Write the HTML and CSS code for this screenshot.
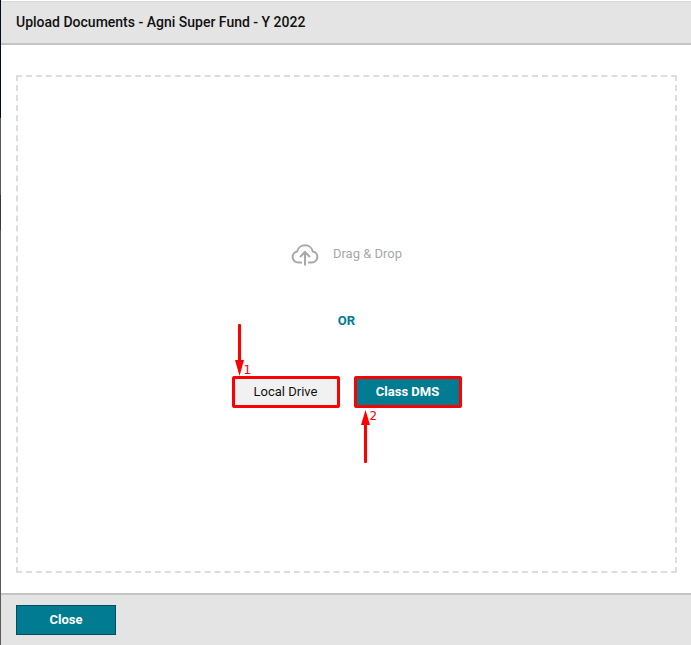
FILE: index.html
```html
<!DOCTYPE html>
<html lang="en">
<head>
<meta charset="utf-8">
<title>Upload Documents</title>
<link rel="stylesheet" href="styles.css">
</head>
<body>
<div class="dialog">
  <header class="dialog-header">
    <h1 class="dialog-title">Upload Documents - Agni Super Fund - Y 2022</h1>
  </header>
  <main class="dialog-body">
    <section class="dropzone">
      <div class="drop-hint">
        <svg class="cloud" width="28" height="24" viewBox="0 0 28 24" fill="none" stroke="currentColor" stroke-width="2" aria-hidden="true">
          <path d="M11 20.5H7.2A5.6 5.6 0 0 1 6.2 9.4A8 8 0 0 1 21.8 9.4A5.6 5.6 0 0 1 20.8 20.5H17"/>
          <path d="M14 23.5V10.5M9 15L14 10L19 15"/>
        </svg>
        <span>Drag &amp; Drop</span>
      </div>
      <div class="or">OR</div>
      <div class="sources">
        <div class="source">
          <button type="button" class="btn btn-local">Local Drive</button>
          <div class="callout callout-above">
            <svg width="9" height="52" viewBox="0 0 9 52" fill="red" aria-hidden="true">
              <rect x="3" y="0" width="3" height="40" rx="1"/><path d="M0 36H9L4.5 52Z"/>
            </svg>
            <span>1</span>
          </div>
        </div>
        <div class="source">
          <button type="button" class="btn btn-class">Class DMS</button>
          <div class="callout callout-below">
            <svg width="9" height="53" viewBox="0 0 9 53" fill="red" aria-hidden="true">
              <rect x="3" y="12" width="3" height="41" rx="1"/><path d="M0 15H9L4.5 0Z"/>
            </svg>
            <span>2</span>
          </div>
        </div>
      </div>
    </section>
  </main>
  <footer class="dialog-footer">
    <button type="button" class="btn-close">Close</button>
  </footer>
</div>
</body>
</html>
```
FILE: styles.css
```css
* { box-sizing: border-box; }

body {
  margin: 0;
  background: linear-gradient(#010f1c 118px, #5a5a5a 118px, #5a5a5a 195px, #383838 195px, #383838 230px, #5a5a5a 230px);
  font-family: Roboto, "Liberation Sans", sans-serif;
  font-size: 13px;
  line-height: 16px;
}

button { font: inherit; padding: 0; cursor: pointer; }

.dialog {
  display: flex;
  flex-direction: column;
  min-height: 100vh;
  margin-left: 1px;
  border-top: 1px solid #fff;
  background: #fff;
}

.dialog-header {
  padding: 10px 15px 11px;
  border-top: 1px solid #d8d8d8;
  border-bottom: 2px solid #c4c4c4;
  background: #e4e4e4;
}

.dialog-title {
  margin: 0;
  color: #111;
  font-size: 14px;
  font-weight: 500;
  line-height: 20px;
}

.dialog-body {
  display: flex;
  flex: 1;
  padding: 30px 14px 20px 15px;
}

.dropzone {
  display: flex;
  flex: 1;
  flex-direction: column;
  align-items: center;
  justify-content: center;
  gap: 47px;
  padding-top: 1px;
  border: 2px dashed #ddd;
}

.drop-hint {
  display: flex;
  align-items: center;
  gap: 14px;
  color: #a8a8a8;
}

.cloud { display: block; }

.or {
  color: #007b91;
  font-weight: 700;
}

.sources { display: flex; gap: 14px; }

.source { position: relative; }

.btn {
  display: block;
  width: 108px;
  height: 32px;
  border: 3px solid red;
  border-radius: 2px;
}

.btn-local { background: #f1f1f1; color: #111; }

.btn-class { background: #007b91; color: #fff; font-weight: 700; }

.callout {
  position: absolute;
  display: flex;
  color: red;
  font-family: "DejaVu Sans", sans-serif;
  font-size: 12px;
  line-height: 12px;
}

.callout svg { display: block; }

.callout-above { bottom: 100%; left: 3px; align-items: flex-end; }

.callout-below { top: calc(100% + 2px); left: 7px; align-items: flex-start; }

.dialog-footer {
  padding: 10px 15px;
  border-top: 2px solid #c4c4c4;
  background: #e4e4e4;
}

.btn-close {
  display: block;
  width: 100px;
  height: 30px;
  border: 1px solid #00505e;
  background: #007b91;
  color: #fff;
  font-weight: 700;
}
```
